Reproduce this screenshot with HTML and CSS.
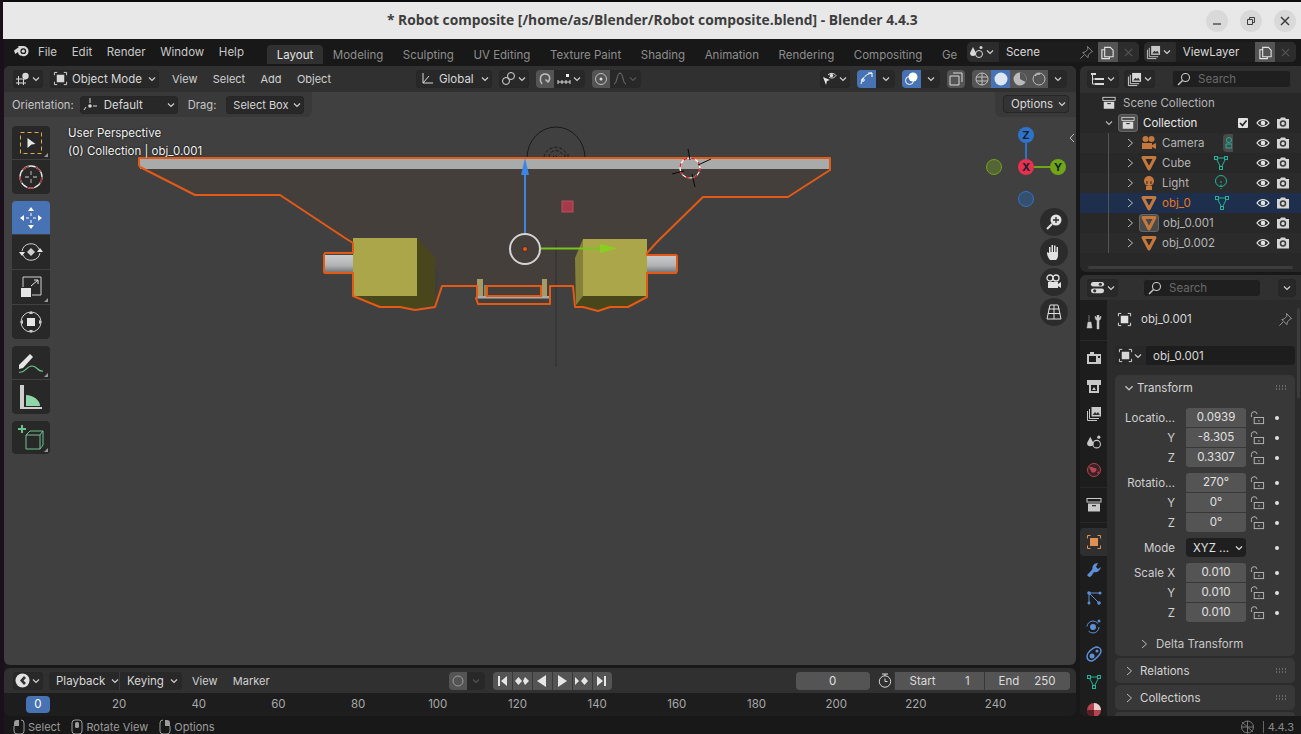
FILE: index.html
```html
<!DOCTYPE html>
<html lang="en">
<head>
<meta charset="utf-8">
<title>Blender</title>
<link rel="stylesheet" href="styles.css">
</head>
<body>
<svg class="defs" aria-hidden="true">
  <defs>
    <linearGradient id="axle" x1="0" y1="0" x2="0" y2="1"><stop offset="0" stop-color="#c9cbcc"/><stop offset=".6" stop-color="#b2b4b5"/><stop offset="1" stop-color="#77797a"/></linearGradient>
    <symbol id="chev" viewBox="0 0 10 10"><path d="M2 3.500 5 6.500 8 3.500" fill="none" stroke="currentColor" stroke-width="1.200"/></symbol>
    <symbol id="chevr" viewBox="0 0 10 10"><path d="M3 1 7.500 5 3 9" fill="none" stroke="currentColor" stroke-width="1"/></symbol>
    <symbol id="lock" viewBox="0 0 16 14"><path d="M1.500 6V3.500a3 3 0 0 1 6 -.5" fill="none" stroke="currentColor"/><rect x="4.500" y="6.500" width="10" height="6.500" fill="none" stroke="currentColor"/><rect x="9" y="9" width="1" height="2" fill="currentColor"/></symbol>
    <symbol id="obj" viewBox="0 0 16 16"><path d="M1.500 1.500h3M11.500 1.500h3v3M14.500 11.500v3h-3M4.500 14.500h-3v-3M1.500 4.500v-3" fill="none" stroke="currentColor"/><rect x="4" y="4" width="8" height="8" fill="currentColor"/></symbol>
    <symbol id="tri" viewBox="0 0 16 16"><path d="M2 2.500h12L8 14Z" fill="none" stroke="#c5783c" stroke-width="3" stroke-linejoin="round"/></symbol>
    <symbol id="mesh" viewBox="0 0 16 16"><path d="M3 3h10L8 13Z" fill="none" stroke="#1fb39a"/><rect x="1.500" y="1.500" width="3" height="3" fill="#282828" stroke="#1fb39a"/><rect x="11.500" y="1.500" width="3" height="3" fill="#282828" stroke="#1fb39a"/><rect x="6.500" y="11.500" width="3" height="3" fill="#282828" stroke="#1fb39a"/></symbol>
    <symbol id="eye" viewBox="0 0 14 14"><path d="M1 7c3-4.500 9-4.500 12 0-3 4.500-9 4.500-12 0Z" fill="none" stroke="#e2e2e2" stroke-width="1.300"/><circle cx="7" cy="7" r="2.300" fill="#e2e2e2"/></symbol>
    <symbol id="cam" viewBox="0 0 14 14"><path d="M1 3h3l1-1.500h4L10 3h3v9.500H1Z" fill="#d6d6d6"/><circle cx="7" cy="7.500" r="3.200" fill="#3a3a3a"/><circle cx="7" cy="7.500" r="1.700" fill="#d6d6d6"/></symbol>
    <symbol id="archive" viewBox="0 0 16 16"><rect x="1" y="1.500" width="14" height="3.500" fill="none" stroke="currentColor"/><path d="M2 6.500h12v8H2Z" fill="currentColor"/><rect x="6" y="8" width="4" height="1.300" fill="#333"/></symbol>
    <symbol id="stack" viewBox="0 0 16 16"><path d="M1.500 5v9.500H11M3.500 3v9.500H13" fill="none" stroke="currentColor"/><rect x="5.500" y="1" width="9.500" height="9.500" fill="currentColor"/><path d="M6.500 9 9 6l1.500 1.500L12 6l2 3Z" fill="#333"/></symbol>
    <symbol id="copy" viewBox="0 0 16 16"><path d="M5 2.500h6l3 3v7H5ZM5 5H2v9.500h8V12.500" fill="none" stroke="currentColor" stroke-width="1.200"/></symbol>
    <symbol id="x" viewBox="0 0 12 12"><path d="M2 2 10 10M10 2 2 10" stroke="currentColor" stroke-width="1.200"/></symbol>
    <symbol id="pin" viewBox="0 0 16 16"><path d="M9 1.500 14.500 7l-1.500.5-3 3-.5 3L4 8l2.500-.5 3-3Z M5.500 10.500 1.500 14.500" fill="none" stroke="currentColor"/></symbol>
    <symbol id="mag" viewBox="0 0 14 14"><circle cx="8.500" cy="5.500" r="4" fill="none" stroke="currentColor" stroke-width="1.100"/><path d="M5.500 8.500 1 13" stroke="currentColor" stroke-width="1.500"/></symbol>
    <symbol id="props" viewBox="0 0 16 16"><rect x="1" y="2" width="14" height="5" rx="2.500" fill="currentColor"/><rect x="1" y="9" width="14" height="5" rx="2.500" fill="currentColor"/><circle cx="11" cy="4.500" r="1.700" fill="#333"/><circle cx="5" cy="11.500" r="1.700" fill="#333"/></symbol>
    <symbol id="grip" viewBox="0 0 12 6"><path d="M1 1h1M4 1h1M7 1h1M10 1h1M1 4h1M4 4h1M7 4h1M10 4h1" stroke="#9a9a9a" stroke-width="1.200"/></symbol>
    <symbol id="mouse-l" viewBox="0 0 12 16"><path d="M1 6V4a3 3 0 0 1 3-3h2v6H1Z" fill="currentColor"/><path d="M1 7v5a3 3 0 0 0 3 3h4a3 3 0 0 0 3-3V4a3 3 0 0 0-3-3" fill="none" stroke="currentColor"/></symbol>
    <symbol id="mouse-m" viewBox="0 0 12 16"><rect x="1" y="1" width="10" height="14" rx="3" fill="none" stroke="currentColor"/><rect x="4" y="3" width="4" height="6" rx="1.500" fill="currentColor"/></symbol>
    <symbol id="mouse-r" viewBox="0 0 12 16"><path d="M11 6V4a3 3 0 0 0-3-3H6v6h5Z" fill="currentColor"/><path d="M11 7v5a3 3 0 0 1-3 3H4a3 3 0 0 1-3-3V4a3 3 0 0 1 3-3" fill="none" stroke="currentColor"/></symbol>
  </defs>
</svg>

<header class="titlebar">
  <span class="title">* Robot composite [/home/as/Blender/Robot composite.blend] - Blender 4.4.3</span>
  <div class="winbtns">
    <span class="winbtn"><svg width="12" height="12" viewBox="0 0 12 12"><path d="M2 9h8" stroke="#3d3d3d" stroke-width="1.300"/></svg></span>
    <span class="winbtn"><svg width="12" height="12" viewBox="0 0 12 12"><path d="M2.500 4.500h5v5h-5ZM4.500 4.500v-2h5v5h-2" fill="none" stroke="#3d3d3d"/></svg></span>
    <span class="winbtn"><svg width="12" height="12" viewBox="0 0 12 12"><path d="M2 2 10 10M10 2 2 10" stroke="#3d3d3d" stroke-width="1.500"/></svg></span>
  </div>
</header>

<div class="app">
  <nav class="topbar">
    <svg class="logo" width="17" height="14" viewBox="0 0 17 14"><path d="M1 7.500 6 4 4.500 3h5c3.500 0 6 2 6 5.200s-2.500 5-5.200 5c-3 0-5.300-1.800-5.300-4.200L2.200 11Z" fill="#d8d8d8"/><circle cx="10.300" cy="8.200" r="2.900" fill="#181818"/><circle cx="10.300" cy="8.200" r="1.600" fill="#d8d8d8"/></svg>
    <div class="menus"><span>File</span><span>Edit</span><span>Render</span><span>Window</span><span>Help</span></div>
    <div class="tabs">
      <span class="tab active">Layout</span><span class="tab">Modeling</span><span class="tab">Sculpting</span><span class="tab">UV Editing</span><span class="tab">Texture Paint</span><span class="tab">Shading</span><span class="tab">Animation</span><span class="tab">Rendering</span><span class="tab">Compositing</span><span class="tab cut">Ge</span>
    </div>
    <div class="scene-block">
      <div class="sel-group scene-g">
        <span class="dd-btn w31"><svg width="15" height="14" viewBox="0 0 15 14"><path d="M4 2 7 8a3 3 0 0 1-6 0Z" fill="#d8d8d8"/><circle cx="10" cy="9" r="3.500" fill="none" stroke="#d8d8d8"/><circle cx="12" cy="2.500" r="1.500" fill="#d8d8d8"/></svg><svg class="ch" width="10" height="10"><use href="#chev"/></svg></span>
        <span class="field-dark scene-f">Scene<svg class="pinic" width="15" height="15"><use href="#pin"/></svg></span>
        <span class="icn lit"><svg width="15" height="15"><use href="#copy"/></svg></span>
        <span class="icn dim"><svg width="11" height="11"><use href="#x"/></svg></span>
      </div>
      <div class="sel-group layer-g">
        <span class="dd-btn w31"><svg width="15" height="15"><use href="#stack"/></svg><svg class="ch" width="10" height="10"><use href="#chev"/></svg></span>
        <span class="field-dark layer-f">ViewLayer</span>
        <span class="icn lit"><svg width="15" height="15"><use href="#copy"/></svg></span>
        <span class="icn dim"><svg width="11" height="11"><use href="#x"/></svg></span>
      </div>
    </div>
  </nav>

  <div class="workspace">
    <div class="leftcol">
    <main class="viewport">
      <div class="vp-header">
        <span class="btn w30"><svg width="15" height="14" viewBox="0 0 15 14"><path d="M1 7h10M1 11h10M3.500 4v9M8.500 7v6" stroke="#d8d8d8"/><circle cx="10.500" cy="4" r="3.200" fill="#d8d8d8"/></svg><svg class="ch" width="10" height="10"><use href="#chev"/></svg></span>
        <span class="btn mode"><svg width="15" height="15"><use href="#obj"/></svg><span class="lb">Object Mode</span><svg class="ch" width="10" height="10"><use href="#chev"/></svg></span>
        <div class="vp-menu"><span>View</span><span>Select</span><span>Add</span><span>Object</span></div>
        <div class="vp-mid">
          <span class="btn global"><svg width="14" height="14" viewBox="0 0 14 14"><path d="M3 1v10h10M3 11l6-7" fill="none" stroke="#d8d8d8"/></svg><span class="lb">Global</span><svg class="ch" width="10" height="10"><use href="#chev"/></svg></span>
          <span class="btn pivot"><svg width="15" height="15" viewBox="0 0 15 15"><circle cx="5" cy="10" r="3.500" fill="none" stroke="#d8d8d8"/><circle cx="10" cy="5" r="3.500" fill="none" stroke="#d8d8d8"/></svg><svg class="ch" width="10" height="10"><use href="#chev"/></svg></span>
          <span class="btn-join snap"><span class="seg lit s18"><svg width="14" height="14" viewBox="0 0 14 14"><path d="M4 12C1 8 2 2 7 2s6 5 3 8L7.500 7.500" fill="none" stroke="#bdbdbd" stroke-width="1.500"/></svg></span><span class="seg s31"><svg width="14" height="12" viewBox="0 0 14 12"><path d="M1 7v4M5 7v4M9 7v4M13 7v4M1 9h12" stroke="#d8d8d8"/><rect x="9" y="1" width="3" height="3" fill="#eee"/></svg><svg class="ch" width="10" height="10"><use href="#chev"/></svg></span></span>
          <span class="btn-join prop"><span class="seg lit s18"><svg width="14" height="14" viewBox="0 0 14 14"><circle cx="7" cy="7" r="5.500" fill="none" stroke="#bdbdbd"/><circle cx="7" cy="7" r="1.500" fill="#ddd"/></svg></span><span class="seg s31 off"><svg width="14" height="13" viewBox="0 0 14 13"><path d="M1 12C4 12 4 1 7 1s3 11 6 11" fill="none" stroke="#777"/></svg><svg class="ch" width="10" height="10"><use href="#chev"/></svg></span></span>
        </div>
        <div class="vp-right">
          <span class="btn w30"><svg width="15" height="14" viewBox="0 0 15 14"><path d="M6 3c2.500-2.500 6-2 8 .5-2 3-5 3-7 1.500" fill="none" stroke="#e2e2e2"/><circle cx="9.500" cy="3.500" r="1.700" fill="#e2e2e2"/><path d="M1 5l7 3-3 1-1 4Z" fill="#e2e2e2"/></svg><svg class="ch" width="10" height="10"><use href="#chev"/></svg></span>
          <span class="btn-join"><span class="seg blue s19"><svg width="15" height="15" viewBox="0 0 15 15"><path d="M2 13C3 7 7 3 13 2M9 2h4v4" fill="none" stroke="#fff"/><circle cx="4" cy="9" r="1.300" fill="none" stroke="#fff"/></svg></span><span class="seg s19"><svg class="ch" width="10" height="10"><use href="#chev"/></svg></span></span>
          <span class="btn-join"><span class="seg blue s19"><svg width="15" height="15" viewBox="0 0 15 15"><circle cx="5.500" cy="9.500" r="4" fill="none" stroke="#fff"/><circle cx="9" cy="6" r="4.500" fill="#fff"/></svg></span><span class="seg s19"><svg class="ch" width="10" height="10"><use href="#chev"/></svg></span></span>
          <span class="btn-join"><span class="seg lit s18"><svg width="14" height="14" viewBox="0 0 14 14"><path d="M4 1h9v9M1 4h9v9H1Z" fill="none" stroke="#d8d8d8"/></svg></span></span>
          <span class="btn-join shade">
            <span class="seg lit s19"><svg width="14" height="14" viewBox="0 0 14 14"><circle cx="7" cy="7" r="6" fill="none" stroke="#bdbdbd"/><path d="M1 5h12M1 9h12M7 1v12" stroke="#bdbdbd"/></svg></span>
            <span class="seg blue s19"><svg width="14" height="14"><circle cx="7" cy="7" r="6.500" fill="#dde6f5"/></svg></span>
            <span class="seg lit s19"><svg width="14" height="14" viewBox="0 0 14 14"><circle cx="7" cy="7" r="6.500" fill="#bbb"/><path d="M7 .5A6.500 6.500 0 0 1 12.500 10L7 7Z" fill="#555"/></svg></span>
            <span class="seg lit s19"><svg width="14" height="14" viewBox="0 0 14 14"><circle cx="7" cy="7" r="6" fill="#555" stroke="#bbb"/><path d="M3 4a5 5 0 0 1 5-2" stroke="#ddd" fill="none"/></svg></span>
            <span class="seg s19"><svg class="ch" width="10" height="10"><use href="#chev"/></svg></span>
          </span>
        </div>
      </div>
      <div class="vp-tools">
        <div class="tool-settings">
          <span class="lbl">Orientation:</span>
          <span class="btn default"><svg width="15" height="15" viewBox="0 0 15 15"><path d="M7 1v5M10 9h4M3 10l-2 3" stroke="#d8d8d8"/><circle cx="7" cy="9" r="1.800" fill="#d8d8d8"/></svg><span class="lb">Default</span><svg class="ch" width="10" height="10"><use href="#chev"/></svg></span>
          <span class="lbl drag">Drag:</span>
          <span class="btn box"><span class="lb">Select Box</span><svg class="ch" width="10" height="10"><use href="#chev"/></svg></span>
        </div>
        <div class="options-wrap"><span class="btn options"><span class="lb">Options</span><svg class="ch" width="10" height="10"><use href="#chev"/></svg></span></div>
      </div>

      <svg class="scene" viewBox="4 66 1072 599" aria-hidden="true">
        <path d="M140 167 195 195H280L345 238 353 243V296L380 307H400L415 310 435 307 442 286H477L476 297 478 304H550V286H573L575 307 583 307 598 311 610 307H628L647 297V253L657 242 703 197H788L830 170V158H139Z" fill="#453f3c"/>
        <line x1="556" y1="240" x2="556" y2="367" stroke="#2f2f2f"/>
        <path d="M527 158A29 31 0 0 1 585 158" fill="none" stroke="#1a1a1a"/>
        <path d="M544 157A12 12 0 0 1 566 153M549 157A7 7 0 0 1 562 154M552 158l3-3 3 3M565 154v4M568 154v4" fill="none" stroke="#1a1a1a" stroke-dasharray="3 2"/>
        <rect x="140" y="159" width="690" height="10" fill="#a9abab"/>
        <rect x="325" y="255" width="29" height="17" fill="url(#axle)"/>
        <rect x="646" y="255" width="30" height="17" fill="url(#axle)"/>
        <path d="M435 268A14 14 0 0 1 438 282L435 295Z" fill="#3e3e3e"/>
        <path d="M417 238 435 258 435 305 415 309 400 307H380L353 296H417Z" fill="#4a461c"/>
        <rect x="353" y="238" width="64" height="58" fill="#aca64b"/>
        <path d="M583 239 575 258V305L598 310 628 306 647 296H583Z" fill="#4a461c"/>
        <path d="M583 239 575 258 576 305 583 296Z" fill="#86813a"/>
        <rect x="583" y="239" width="64" height="57" fill="#aca64b"/>
        <path d="M477 279h6v17h-6ZM542 279h5v17h-5Z" fill="#a69a68"/>
        <path d="M484 285h2v11h-2Z" fill="#8f8558"/>
        <rect x="476" y="296" width="74" height="2.500" fill="#a9abab"/>
        <path d="M140 167 195 195H280L345 238 353 243V253H325L324 255V272L325 273H353V296L380 307H400L415 310 435 307 442 286H477V297L476 298 478 304H550V286H573L575 307 583 307 598 311 610 307H628L647 297V273H676L677 271V256L676 255H647V253L657 242 703 197H788L830 170V158H139V165Z" fill="none" stroke="#e35a17" stroke-width="2" stroke-linejoin="round"/>
        <path d="M487 286H541V296H487Z" fill="none" stroke="#e35a17" stroke-width="2"/>
        <rect x="562" y="201" width="11" height="11" fill="#a63a48" stroke="#b85060"/>
        <g fill="none"><circle cx="690" cy="168" r="10" stroke="#fff" stroke-width="1.200"/><circle cx="690" cy="168" r="10" stroke="#e01010" stroke-width="1.200" stroke-dasharray="4 4"/><path d="M688 149 690 160M711 159 698 165M672 174 684 171M695 187 692 174" stroke="#0a0a0a"/></g>
        <line x1="525" y1="234" x2="525" y2="170" stroke="#3d85e0" stroke-width="2"/>
        <path d="M525 158 521 175H529Z" fill="#3d85e0"/>
        <circle cx="525" cy="249" r="15" fill="none" stroke="#d4d4d4" stroke-width="2"/>
        <circle cx="525" cy="249" r="2.500" fill="#e35a17" stroke="#222" stroke-width=".7"/>
        <line x1="541" y1="248.500" x2="605" y2="248.500" stroke="#76c41e" stroke-width="2"/>
        <path d="M617 248.500 600 244V253Z" fill="#86d11e"/>
        <g class="nav-axes">
          <line x1="1026" y1="143" x2="1026" y2="160" stroke="#2e73c8" stroke-width="2"/>
          <line x1="1034" y1="167" x2="1052" y2="167" stroke="#6fa516" stroke-width="2"/>
          <circle cx="1026" cy="135" r="8" fill="#2e73c8"/>
          <circle cx="1026" cy="167" r="8" fill="#e8304f"/>
          <circle cx="1058" cy="167" r="8" fill="#6fa516"/>
          <circle cx="994" cy="167" r="7.500" fill="#556536" stroke="#6fa516"/>
          <circle cx="1026" cy="199" r="7.500" fill="#35506f" stroke="#2e73c8"/>
          <text x="1026" y="139" class="ax">Z</text>
          <text x="1026" y="171" class="ax">X</text>
          <text x="1058" y="171" class="ax">Y</text>
        </g>
        <path d="M1074 134 1070 138 1074 142" fill="none" stroke="#bbb"/>
      </svg>

      <div class="toolbar">
        <div class="tgroup">
          <span class="tool h33 corner"><svg width="24" height="24" viewBox="0 0 24 24"><rect x="1.500" y="1.500" width="21" height="21" fill="none" stroke="#e3a94b" stroke-dasharray="4 3"/><path d="M8.500 7 16.500 13 12.500 13.500 8.500 17Z" fill="#e6e6e6"/></svg></span>
          <span class="tool h34"><svg width="24" height="24" viewBox="0 0 24 24"><circle cx="12" cy="12" r="11" fill="none" stroke="#e8e8e8" stroke-width="1.300"/><circle cx="12" cy="12" r="11" fill="none" stroke="#a03038" stroke-width="1.300" stroke-dasharray="7 7"/><path d="M12 6v4M12 14v4M6 12h4M14 12h4" stroke="#999" stroke-width="1.300"/></svg></span>
        </div>
        <div class="tgroup">
          <span class="tool h33 active"><svg width="24" height="24" viewBox="0 0 24 24"><path d="M12 1l3 4H9ZM12 23l3-4H9ZM1 12l4-3v6ZM23 12l-4-3v6Z" fill="#fff"/><path d="M12 7v3M12 14v3M7 12h3M14 12h3" stroke="#fff"/></svg></span>
          <span class="tool h34"><svg width="24" height="24" viewBox="0 0 24 24"><path d="M3 11A9 9 0 0 1 20 9M21 13A9 9 0 0 1 4 15" fill="none" stroke="#cfcfcf"/><path d="M0 12h6l-3 4ZM18 12h6l-3-4Z" fill="#e6e6e6"/><path d="M12 8l4 4-4 4-4-4Z" fill="#cfcfcf"/></svg></span>
          <span class="tool h34 corner"><svg width="24" height="24" viewBox="0 0 24 24"><path d="M4 12V2H22V20H13" fill="none" stroke="#cfcfcf"/><rect x="2" y="13" width="10" height="9" fill="#e6e6e6"/><path d="M12 11 19 5M15 5h4v4" fill="none" stroke="#e6e6e6"/></svg></span>
          <span class="tool h34"><svg width="24" height="24" viewBox="0 0 24 24"><circle cx="12" cy="12" r="10" fill="none" stroke="#cfcfcf"/><rect x="8" y="8" width="8" height="8" fill="#e6e6e6"/><path d="M12 1l2 3h-4ZM12 23l2-3h-4ZM1 12l3-2v4ZM23 12l-3-2v4Z" fill="#cfcfcf"/></svg></span>
        </div>
        <div class="tgroup">
          <span class="tool h33 corner"><svg width="28" height="24" viewBox="0 0 28 24"><path d="M2 14 13 3l3 3L6 17 2 18Z" fill="#e6e6e6"/><path d="M2 21C8 23 9 15 15 15s5 6 11 5" fill="none" stroke="#6ec28f" stroke-width="1.200"/></svg></span>
          <span class="tool h34"><svg width="24" height="26" viewBox="0 0 24 26"><path d="M1 1h4v22h18v2H1Z" fill="#cfcfcf"/><path d="M7 22V11c7 0 14 5 14 11Z" fill="#8fd6a8"/></svg></span>
        </div>
        <div class="tgroup">
          <span class="tool h33 corner"><svg width="26" height="26" viewBox="0 0 26 26"><path d="M8 10h14v14H8ZM8 10l4-4h13v14l-3 4M22 10l3-4" fill="none" stroke="#6ec28f"/><path d="M4 0v8M0 4h8" stroke="#6ec28f" stroke-width="2"/></svg></span>
        </div>
      </div>
      <div class="vp-info"><div>User Perspective</div><div>(0) Collection | obj_0.001</div></div>
      <div class="nav-btns">
        <span class="nav"><svg width="18" height="18" viewBox="0 0 18 18"><circle cx="11" cy="7" r="5.500" fill="#e2e2e2"/><path d="M7 11 2 16" stroke="#e2e2e2" stroke-width="2"/><path d="M11 4v6M8 7h6" stroke="#2b2b2b" stroke-width="1.300"/></svg></span>
        <span class="nav"><svg width="18" height="18" viewBox="0 0 18 18"><path d="M5 17C2 13 2 11 2 9l2 1V4h1.500v5h1V2H8v7h1V2.500h1.500V9h1V4H13v8c0 3-1 4-2 5Z" fill="#e2e2e2"/></svg></span>
        <span class="nav"><svg width="18" height="18" viewBox="0 0 18 18"><circle cx="5" cy="5" r="3" fill="none" stroke="#e2e2e2" stroke-width="1.300"/><circle cx="11" cy="5" r="3" fill="none" stroke="#e2e2e2" stroke-width="1.300"/><path d="M3 9h10v6H3ZM13 11l3-2v6l-3-2Z" fill="#e2e2e2"/></svg></span>
        <span class="nav"><svg width="18" height="18" viewBox="0 0 18 18"><path d="M5 2h8l3 14H2ZM9 2v14M3.500 6h11M2.800 10.500h12.400" fill="none" stroke="#e2e2e2"/></svg></span>
      </div>
    </main>

    <section class="timeline">
      <div class="tl-head">
        <span class="btn w30"><svg width="15" height="15" viewBox="0 0 15 15"><circle cx="7.500" cy="7.500" r="7" fill="#e2e2e2"/><path d="M9 3 5 7.500 9 12l2-2-2.500-2.500L11 5Z" fill="#333"/></svg><svg class="ch" width="10" height="10"><use href="#chev"/></svg></span>
        <div class="btn-join pk"><span class="seg pb"><span>Playback</span><svg class="ch" width="10" height="10"><use href="#chev"/></svg></span><span class="seg ky"><span>Keying</span><svg class="ch" width="10" height="10"><use href="#chev"/></svg></span></div>
        <div class="vp-menu tlm"><span>View</span><span>Marker</span></div>
        <div class="tl-mid">
          <span class="btn-join rec"><span class="seg lit s18"><svg width="12" height="12"><circle cx="6" cy="6" r="5" fill="none" stroke="#9a9a9a"/></svg></span><span class="seg s18 off"><svg class="ch" width="10" height="10"><use href="#chev"/></svg></span></span>
          <span class="transport">
            <span class="tp"><svg width="12" height="12" viewBox="0 0 12 12"><path d="M2 1h2v10H2ZM11 1v10L5 6Z" fill="#e6e6e6"/></svg></span>
            <span class="tp"><svg width="14" height="12" viewBox="0 0 14 12"><path d="M3.500 2 7 6 3.500 10 0 6ZM10 2l4 4-4 4-2-4Z" fill="#e6e6e6"/></svg></span>
            <span class="tp"><svg width="12" height="12" viewBox="0 0 12 12"><path d="M10 0v12L1 6Z" fill="#e6e6e6"/></svg></span>
            <span class="tp"><svg width="12" height="12" viewBox="0 0 12 12"><path d="M2 0v12l9-6Z" fill="#e6e6e6"/></svg></span>
            <span class="tp"><svg width="14" height="12" viewBox="0 0 14 12"><path d="M0 2l4 4-4 4ZM9.500 2 13 6 9.500 10 6 6Z" fill="#e6e6e6"/></svg></span>
            <span class="tp"><svg width="12" height="12" viewBox="0 0 12 12"><path d="M1 1v10l6-5ZM8 1h2v10H8Z" fill="#e6e6e6"/></svg></span>
          </span>
        </div>
        <div class="tl-right">
          <span class="cur">0</span>
          <span class="range">
            <span class="stop"><svg width="14" height="15" viewBox="0 0 14 15"><circle cx="7" cy="8.500" r="5.700" fill="none" stroke="#d8d8d8"/><path d="M4 1h6M7 1v2M7 5.500v3h2.500" fill="none" stroke="#d8d8d8"/></svg></span>
            <span class="rf st"><span>Start</span><span>1</span></span>
            <span class="rf en"><span>End</span><span>250</span></span>
          </span>
        </div>
      </div>
      <div class="ruler">
        <span class="tick cur-tick"><b>0</b></span><span class="tick">20</span><span class="tick">40</span><span class="tick">60</span><span class="tick">80</span><span class="tick">100</span><span class="tick">120</span><span class="tick">140</span><span class="tick">160</span><span class="tick">180</span><span class="tick">200</span><span class="tick">220</span><span class="tick">240</span>
      </div>
    </section>
    </div>

    <aside class="rightcol">
      <section class="outliner">
        <div class="ol-head">
          <span class="btn w32"><svg width="15" height="14" viewBox="0 0 15 14"><path d="M1 1h5v2H1Z M5 6h9v2H5ZM5 11h9v2H5Z" fill="#d8d8d8"/><path d="M2.500 3v9h3M2.500 7h3" fill="none" stroke="#d8d8d8"/></svg><svg class="ch" width="10" height="10"><use href="#chev"/></svg></span>
          <span class="btn w31"><svg width="15" height="15"><use href="#stack"/></svg><svg class="ch" width="10" height="10"><use href="#chev"/></svg></span>
          <span class="search s-ol"><svg width="14" height="14"><use href="#mag"/></svg><span>Search</span></span>
        </div>
        <ul class="tree">
          <li class="row sc"><svg class="ic" width="14" height="14"><use href="#archive"/></svg><span class="nm">Scene Collection</span></li>
          <li class="row coll"><svg class="ex" width="10" height="10"><use href="#chev"/></svg><span class="actico"><svg width="14" height="14"><use href="#archive"/></svg></span><span class="nm hi">Collection</span><span class="check"><svg width="10" height="10" viewBox="0 0 10 10"><path d="M2 5 4.500 7.500 8.500 2.500" fill="none" stroke="#222" stroke-width="1.600"/></svg></span><span class="vis"><svg width="14" height="14"><use href="#eye"/></svg><svg width="14" height="14"><use href="#cam"/></svg></span></li>
          <li class="row item alt"><svg class="ex" width="10" height="10"><use href="#chevr"/></svg><svg class="ic" width="16" height="16" viewBox="0 0 16 16"><circle cx="4.500" cy="4" r="3" fill="#c5783c"/><circle cx="10.500" cy="4" r="3" fill="#c5783c"/><path d="M1 8h10v6H1ZM11 10l4-2v6l-4-2Z" fill="#c5783c"/></svg><span class="nm w-cam">Camera</span><span class="camdata"><svg width="9" height="14" viewBox="0 0 9 14"><circle cx="6" cy="4" r="2.500" fill="none" stroke="#1fb39a"/><path d="M3 8h6v4H3Z" fill="none" stroke="#1fb39a"/></svg></span><span class="vis"><svg width="14" height="14"><use href="#eye"/></svg><svg width="14" height="14"><use href="#cam"/></svg></span></li>
          <li class="row item"><svg class="ex" width="10" height="10"><use href="#chevr"/></svg><svg class="ic" width="16" height="16"><use href="#tri"/></svg><span class="nm w-cube">Cube</span><svg class="dt" width="16" height="16"><use href="#mesh"/></svg><span class="vis"><svg width="14" height="14"><use href="#eye"/></svg><svg width="14" height="14"><use href="#cam"/></svg></span></li>
          <li class="row item alt"><svg class="ex" width="10" height="10"><use href="#chevr"/></svg><svg class="ic" width="16" height="16" viewBox="0 0 16 16"><circle cx="8" cy="6" r="5" fill="#c5783c"/><path d="M5 11h6v4H5Z" fill="#c5783c"/><path d="M6 6v3M10 6v3" stroke="#282828"/></svg><span class="nm w-cube">Light</span><svg class="dt" width="16" height="16" viewBox="0 0 16 16"><circle cx="8" cy="6" r="5.500" fill="none" stroke="#1fb39a"/><path d="M8 6v8" stroke="#1fb39a" stroke-dasharray="2 1.500"/></svg><span class="vis"><svg width="14" height="14"><use href="#eye"/></svg><svg width="14" height="14"><use href="#cam"/></svg></span></li>
          <li class="row item sel"><svg class="ex" width="10" height="10"><use href="#chevr"/></svg><svg class="ic" width="16" height="16"><use href="#tri"/></svg><span class="nm w-obj orange">obj_0</span><svg class="dt" width="16" height="16"><use href="#mesh"/></svg><span class="vis"><svg width="14" height="14"><use href="#eye"/></svg><svg width="14" height="14"><use href="#cam"/></svg></span></li>
          <li class="row item"><svg class="ex" width="10" height="10"><use href="#chevr"/></svg><span class="actico tight"><svg width="16" height="16"><use href="#tri"/></svg></span><span class="nm">obj_0.001</span><span class="vis"><svg width="14" height="14"><use href="#eye"/></svg><svg width="14" height="14"><use href="#cam"/></svg></span></li>
          <li class="row item alt"><svg class="ex" width="10" height="10"><use href="#chevr"/></svg><svg class="ic" width="16" height="16"><use href="#tri"/></svg><span class="nm">obj_0.002</span><span class="vis"><svg width="14" height="14"><use href="#eye"/></svg><svg width="14" height="14"><use href="#cam"/></svg></span></li>
        </ul>
        <div class="ol-scroll"></div>
      </section>

      <section class="properties">
        <div class="pr-head">
          <span class="btn w31"><svg width="15" height="15"><use href="#props"/></svg><svg class="ch" width="10" height="10"><use href="#chev"/></svg></span>
          <span class="search s-pr"><svg width="14" height="14"><use href="#mag"/></svg><span>Search</span></span>
          <span class="btn w18"><svg class="ch" width="10" height="10"><use href="#chev"/></svg></span>
        </div>
        <div class="pr-body">
          <div class="pr-tabs">
            <div class="tabgroup first"><span class="ptab"><svg width="16" height="16" viewBox="0 0 16 16"><path d="M3 1v6M2 8h3l1 6H1ZM11 1v3l-2-2c0 3 1 4 2 4.500V15h2V6.500C14 6 15 5 15 2l-2 2V1" fill="#c9c9c9" stroke="#c9c9c9" stroke-width=".5"/></svg></span></div>
            <div class="tabgroup">
              <span class="ptab"><svg width="16" height="16" viewBox="0 0 16 16"><path d="M1 4h14v10H1Z" fill="#c9c9c9"/><rect x="4" y="2" width="4" height="2" fill="#c9c9c9"/><rect x="3" y="6" width="7" height="6" fill="#1d1d1d"/><rect x="12" y="6" width="2" height="2" fill="#1d1d1d"/></svg></span>
              <span class="ptab"><svg width="16" height="16" viewBox="0 0 16 16"><path d="M1 2h14v5H13V15H3V7H1Z" fill="#c9c9c9"/><path d="M5 7h6v6H5Z" fill="#1d1d1d"/><path d="M6 12 8 9l2 3Z" fill="#c9c9c9"/></svg></span>
              <span class="ptab"><svg width="16" height="16"><use href="#stack"/></svg></span>
              <span class="ptab"><svg width="16" height="16" viewBox="0 0 15 14"><path d="M4 2 7 8a3 3 0 0 1-6 0Z" fill="#c9c9c9"/><circle cx="10" cy="9" r="3.500" fill="none" stroke="#c9c9c9"/><circle cx="12" cy="2.500" r="1.500" fill="#c9c9c9"/></svg></span>
              <span class="ptab"><svg width="16" height="16" viewBox="0 0 16 16"><circle cx="8" cy="8" r="6.500" fill="#3a2226" stroke="#b5444f"/><path d="M3 5c3-1 4 1 6 1s2 3 0 4-3 1-4-1ZM11 11l2-2v3Z" fill="#b5444f"/></svg></span>
            </div>
            <div class="tabgroup"><span class="ptab"><svg width="16" height="16"><use href="#archive"/></svg></span></div>
            <div class="tabgroup last">
              <span class="ptab current"><svg width="16" height="16" viewBox="0 0 16 16"><path d="M1.500 4.500v-3h3M11.500 1.500h3v3M14.500 11.500v3h-3M4.500 14.500h-3v-3" fill="none" stroke="#e09050"/><rect x="4" y="4" width="8" height="8" fill="#e09050"/></svg></span>
              <span class="ptab"><svg width="16" height="16" viewBox="0 0 16 16"><path d="M1 13c2 3 4 2 5 0l2-3c3 1 6-1 7-5l-3 2-2-2 2-4C8 1 6 4 6.500 7L4 10Z" fill="#5d8fd6"/></svg></span>
              <span class="ptab"><svg width="16" height="16" viewBox="0 0 16 16"><circle cx="3" cy="3" r="1.800" fill="#5d8fd6"/><circle cx="14" cy="3" r="1.500" fill="#5d8fd6"/><circle cx="3" cy="13" r="1.500" fill="#5d8fd6"/><circle cx="13" cy="13" r="1.800" fill="#5d8fd6"/><path d="M3 3h11M3 3v10M3 3l10 10" stroke="#5d8fd6"/></svg></span>
              <span class="ptab"><svg width="16" height="16" viewBox="0 0 16 16"><circle cx="7" cy="9" r="6" fill="none" stroke="#5d8fd6" stroke-dasharray="14 5"/><circle cx="7" cy="9" r="3" fill="#5d8fd6"/><circle cx="13" cy="3" r="1.500" fill="#5d8fd6"/></svg></span>
              <span class="ptab"><svg width="16" height="16" viewBox="0 0 16 16"><path d="M1 10c0-3 5-8 9-9 3 0 5 2 5 4 0 3-6 9-9 10-3 0-5-2-5-5Z" fill="none" stroke="#5d8fd6" stroke-width="1.500"/><circle cx="6" cy="10" r="2.500" fill="#5d8fd6"/><circle cx="11" cy="5" r="1.500" fill="#5d8fd6"/></svg></span>
              <span class="ptab"><svg width="16" height="16"><use href="#mesh"/></svg></span>
              <span class="ptab"><svg width="16" height="16" viewBox="0 0 16 16"><circle cx="8" cy="8" r="7" fill="#b5444f"/><path d="M8 8V1A7 7 0 0 1 15 8Z" fill="#e8d0d0"/><path d="M8 8H1A7 7 0 0 0 8 15Z" fill="#5a1e26"/></svg></span>
            </div>
          </div>
          <div class="pr-main">
            <div class="ctx"><svg class="c-ic" width="15" height="15"><use href="#obj"/></svg><span class="ctx-t">obj_0.001</span><svg class="c-pin" width="15" height="15"><use href="#pin"/></svg></div>
            <div class="namefield"><span class="nf-ic"><svg width="15" height="15"><use href="#obj"/></svg><svg class="ch" width="10" height="10"><use href="#chev"/></svg></span><span class="nf-t">obj_0.001</span></div>
            <div class="panel transform">
              <div class="p-title"><svg class="ch" width="12" height="12"><use href="#chev"/></svg><span>Transform</span><svg class="grip" width="12" height="6"><use href="#grip"/></svg></div>
              <div class="pgroup">
                <div class="prow"><span class="pl">Locatio...</span><span class="num top">0.0939</span><svg class="lk" width="15" height="14"><use href="#lock"/></svg><i class="dot"></i></div>
                <div class="prow"><span class="pl">Y</span><span class="num">-8.305</span><svg class="lk" width="15" height="14"><use href="#lock"/></svg><i class="dot"></i></div>
                <div class="prow"><span class="pl">Z</span><span class="num bot">0.3307</span><svg class="lk" width="15" height="14"><use href="#lock"/></svg><i class="dot"></i></div>
              </div>
              <div class="pgroup">
                <div class="prow"><span class="pl">Rotatio...</span><span class="num top">270°</span><svg class="lk" width="15" height="14"><use href="#lock"/></svg><i class="dot"></i></div>
                <div class="prow"><span class="pl">Y</span><span class="num">0°</span><svg class="lk" width="15" height="14"><use href="#lock"/></svg><i class="dot"></i></div>
                <div class="prow"><span class="pl">Z</span><span class="num bot">0°</span><svg class="lk" width="15" height="14"><use href="#lock"/></svg><i class="dot"></i></div>
              </div>
              <div class="pgroup">
                <div class="prow"><span class="pl">Mode</span><span class="modesel"><span>XYZ ...</span><svg width="10" height="10"><use href="#chev"/></svg></span><span class="lk blank"></span><i class="dot"></i></div>
              </div>
              <div class="pgroup">
                <div class="prow"><span class="pl">Scale X</span><span class="num top">0.010</span><svg class="lk" width="15" height="14"><use href="#lock"/></svg><i class="dot"></i></div>
                <div class="prow"><span class="pl">Y</span><span class="num">0.010</span><svg class="lk" width="15" height="14"><use href="#lock"/></svg><i class="dot"></i></div>
                <div class="prow"><span class="pl">Z</span><span class="num bot">0.010</span><svg class="lk" width="15" height="14"><use href="#lock"/></svg><i class="dot"></i></div>
              </div>
              <div class="subp"><svg width="10" height="10"><use href="#chevr"/></svg><span>Delta Transform</span></div>
            </div>
            <div class="panel closed"><svg width="10" height="10"><use href="#chevr"/></svg><span>Relations</span><svg class="grip" width="12" height="6"><use href="#grip"/></svg></div>
            <div class="panel closed"><svg width="10" height="10"><use href="#chevr"/></svg><span>Collections</span><svg class="grip" width="12" height="6"><use href="#grip"/></svg></div>
            <div class="panel closed stub"></div>
          </div>
          <div class="pr-scroll"></div>
        </div>
      </section>
    </aside>
  </div>

  <footer class="status">
    <span class="st-i first"><svg width="12" height="16"><use href="#mouse-l"/></svg>Select</span>
    <span class="st-i"><svg width="12" height="16"><use href="#mouse-m"/></svg>Rotate View</span>
    <span class="st-i"><svg width="12" height="16"><use href="#mouse-r"/></svg>Options</span>
    <span class="st-r"><svg width="15" height="14" viewBox="0 0 15 14"><circle cx="7.500" cy="7" r="6" fill="none" stroke="#777"/><path d="M1.500 7h12M7.500 1v12M2 2l11 10" stroke="#777"/></svg><i class="st-sep"></i>4.4.3</span>
  </footer>
</div>
</body>
</html>
```
FILE: styles.css
```css
* { box-sizing: border-box; }
html, body { margin: 0; padding: 0; }
body {
  width: 1301px; height: 734px; overflow: hidden;
  background: #1a0f1a;
  font-family: Inter, "Noto Sans", sans-serif;
  font-size: 11.5px; color: #d4d4d4;
  display: flex; flex-direction: column;
  padding-left: 3px;
}
.defs { position: absolute; width: 0; height: 0; }
svg { display: block; flex: none; }
ul { list-style: none; margin: 0; padding: 0; }

/* window title */
.titlebar {
  height: 39px; flex: none;
  border-top: 2px solid #0c0c0c;
  background: #e8e8e8; position: relative;
  display: flex; align-items: center; justify-content: flex-end;
}
.title {
  position: absolute; left: 384px; top: 9px;
  font: 700 13.8px/18px "Open Sans", sans-serif; color: #3d3d3d; white-space: nowrap;
}
.winbtns { display: flex; gap: 12px; margin-right: 5px; }
.winbtn { width: 22px; height: 22px; border-radius: 50%; background: #d9d9d9; display: flex; align-items: center; justify-content: center; }

.app { flex: 1; min-height: 0; display: flex; flex-direction: column; background: #181818; margin-left: 1px; }

/* top bar */
.topbar { height: 27px; flex: none; display: flex; align-items: flex-start; color: #c8c8c8; }
.logo { margin: 4px 0 0 9px; }
.menus { display: flex; gap: 14.6px; margin: 5px 0 0 8px; line-height: 16px; }
.tabs { display: flex; margin: 6px 0 0 23px; width: 700px; overflow: hidden; }
.tab { height: 19px; padding: 1px 9.8px 0; line-height: 18px; color: #8d8d8d; white-space: nowrap; border-radius: 4px 4px 0 0; }
.tab.active { background: #303030; color: #e4e4e4; }
.scene-block { display: flex; gap: 5px; margin-top: 3px; }
.sel-group { display: flex; height: 20px; background: #2a2a2a; border-radius: 5px; overflow: hidden; }
.dd-btn { display: flex; align-items: center; justify-content: center; gap: 1px; background: #2c2c2c; }
.w31 { width: 31px; }
.w32 { width: 32px; justify-content: center; gap: 1px; }
.field-dark { background: #1d1d1d; line-height: 20px; padding-left: 7px; color: #d8d8d8; margin-left: 1px; position: relative; display: flex; justify-content: space-between; align-items: center; }
.scene-f { width: 99px; padding-right: 4px; }
.layer-f { width: 80px; }
.pinic { color: #8a8a8a; }
.icn { width: 20px; display: flex; align-items: center; justify-content: center; }
.icn.lit { background: #545454; color: #e2e2e2; }
.icn.dim { background: #2c2c2c; color: #555; margin-left: 1px; }
.scene-g { width: 172px; }
.layer-g { width: 152px; }

/* layout columns */
.workspace { height: 650px; flex: none; display: flex; gap: 4px; }
.leftcol { width: 1072px; flex: none; display: flex; flex-direction: column; gap: 3px; }

/* viewport */
.viewport { height: 599px; flex: none; background: #404040; border-radius: 6px; position: relative; overflow: hidden; }
.vp-header { height: 26px; background: #303030; display: flex; align-items: center; padding: 0 9px 1px; position: relative; z-index: 2; }
.btn {
  height: 18px; background: #282828; border-radius: 4px;
  display: inline-flex; align-items: center; color: #d8d8d8; flex: none;
  box-shadow: inset 0 0 0 1px #262626;
}
.w30 { width: 30px; justify-content: center; gap: 1px; }
.w18 { width: 18px; justify-content: center; }
.ch { color: #cfcfcf; }
.lb { flex: 1; }
.mode { width: 109px; margin-left: 7px; padding: 0 2px 0 3px; gap: 4px; }
.vp-menu { display: flex; gap: 15.3px; margin-left: 13px; color: #d0d0d0; font-size: 11px; }
.vp-mid { display: flex; gap: 7px; margin-left: 85px; }
.global { width: 76px; padding: 0 2px 0 4px; gap: 5px; }
.pivot { width: 30px; justify-content: center; gap: 1px; }
.btn-join { display: inline-flex; height: 18px; border-radius: 4px; overflow: hidden; flex: none; }
.seg { height: 18px; display: inline-flex; align-items: center; justify-content: center; background: #282828; color: #d8d8d8; }
.seg.lit { background: #545454; }
.seg.blue { background: #4772b3; }
.s18 { width: 18px; }
.s19 { width: 19px; }
.s31 { width: 31px; gap: 1px; }
.off .ch { color: #555; }
.vp-right { display: flex; gap: 7px; margin-left: auto; }
.vp-tools { height: 25px; display: flex; justify-content: space-between; position: relative; z-index: 2; }
.tool-settings { width: 308px; background: #393939; border-radius: 0 0 6px 0; display: flex; align-items: center; padding-left: 8px; }
.lbl { color: #c4c4c4; font-size: 11.2px; }
.default { width: 98px; margin-left: 6px; padding: 0 2px 0 3px; gap: 6px; }
.drag { margin-left: 10px; }
.box { width: 78px; margin-left: 10px; padding: 0 2px 0 7px; font-size: 11px; }
.options-wrap { width: 81px; background: #393939; border-radius: 0 0 0 6px; padding: 3px 0 0 8px; }
.options { width: 66px; padding: 0 2px 0 8px; background: #333; }
.scene { position: absolute; left: 0; top: 0; width: 1072px; height: 599px; }
.ax { font: 700 11px Inter, sans-serif; text-anchor: middle; fill: #10202e; }
.toolbar { position: absolute; left: 8px; top: 60px; width: 38px; display: flex; flex-direction: column; gap: 7px; }
.tgroup { display: flex; flex-direction: column; gap: 1px; border-radius: 4px; overflow: hidden; }
.tool { display: flex; align-items: center; justify-content: center; background: #282828; position: relative; width: 38px; }
.tool.active { background: #4772b3; }
.h33 { height: 33px; }
.h34 { height: 34px; }
.corner::after { content: ""; position: absolute; right: 2px; bottom: 2px; border-style: solid; border-width: 0 0 4px 4px; border-color: transparent transparent #999 transparent; }
.vp-info { position: absolute; left: 64px; top: 58px; font-size: 11.5px; line-height: 18px; color: #f2f2f2; text-shadow: 0 0 2px #000; }
.nav-btns { position: absolute; left: 1036px; top: 142px; display: flex; flex-direction: column; gap: 2px; }
.nav { width: 28px; height: 28px; border-radius: 50%; background: #2b2b2b; display: flex; align-items: center; justify-content: center; color: #e2e2e2; }

/* right column */
.rightcol { width: 221px; flex: none; display: flex; flex-direction: column; gap: 3px; }
.outliner { height: 206px; flex: none; background: #282828; border-radius: 6px 0 0 6px; display: flex; flex-direction: column; overflow: hidden; }
.ol-head { height: 27px; background: #303030; display: flex; align-items: center; padding: 0 0 1px 7px; gap: 5px; flex: none; }
.ol-head .w31 { justify-content: center; gap: 1px; }
.search { height: 18px; background: #1f1f1f; border-radius: 4px; display: flex; align-items: center; gap: 7px; padding-left: 5px; color: #6a6a6a; box-shadow: inset 0 0 0 1px #303030; }
.search svg { color: #c8c8c8; }
.s-ol { width: 119px; margin-left: 12px; }
.tree { flex: 1; }
.row { height: 20px; display: flex; align-items: center; position: relative; color: #b4b4b4; background: #282828; }
.row.alt { background: #2b2b2b; }
.row.sel { background: #1d2f4d; }
.sc { padding-left: 22px; }
.sc .ic { color: #d8d8d8; margin-right: 7px; }
.coll { padding-left: 24px; }
.coll .actico { margin-left: 4px; }
.actico { width: 20px; height: 18px; background: #4a4a4a; border-radius: 4px; display: flex; align-items: center; justify-content: center; color: #d8d8d8; box-shadow: inset 0 0 0 1px #666; }
.nm { white-space: nowrap; }
.hi { color: #e8e8e8; margin-left: 5px; }
.check { width: 10px; height: 10px; background: #e2e2e2; border-radius: 1px; position: absolute; left: 158px; top: 5px; display: flex; }
.vis { position: absolute; left: 176px; top: 3px; display: flex; gap: 6px; }
.item { padding-left: 45px; }
.item::before { content: ""; position: absolute; left: 28px; top: 0; bottom: 0; width: 1px; background: #555; }
.item .ex { color: #bdbdbd; margin-right: 6px; }
.item .ic { margin-right: 5px; }
.item .actico { margin: 0 4px 0 -2px; }
.w-cam { width: 61px; }
.w-cube { width: 51px; }
.w-obj { width: 52px; }
.orange { color: #e8761f; }
.camdata { width: 10px; height: 18px; background: #4a4a4a; border-radius: 4px 0 0 4px; display: flex; align-items: center; }
.ol-scroll { height: 3px; margin: 0 8px 3px; background: #3c3c3c; border-radius: 2px; flex: none; }

.properties { flex: 1; min-height: 0; background: #2b2b2b; border-radius: 6px 0 0 6px; display: flex; flex-direction: column; overflow: hidden; }
.pr-head { height: 25px; background: #303030; display: flex; align-items: center; padding-left: 7px; flex: none; }
.pr-head .w31 { justify-content: center; gap: 1px; }
.s-pr { width: 118px; margin-left: 25px; }
.pr-head .w18 { margin-left: 17px; }
.pr-body { flex: 1; min-height: 0; display: flex; position: relative; overflow: hidden; }
.pr-tabs { width: 27px; background: #1d1d1d; flex: none; }
.tabgroup { padding: 0 0 3px; border-bottom: 1px solid #282828; margin-bottom: 3px; display: flex; flex-direction: column; }
.tabgroup.first { padding-top: 7px; }
.tabgroup.last { border: 0; margin: 5px 0 0; }
.ptab { height: 28px; width: 27px; display: flex; align-items: center; justify-content: center; border-radius: 4px 0 0 4px; color: #c9c9c9; padding-left: 1px; }
.tabgroup:nth-child(1) .ptab { height: 30px; }
.ptab.current { background: #2f2f2f; }
.pr-main { flex: 1; padding: 7px 6px 0 8px; min-width: 0; }
.ctx { height: 24px; display: flex; align-items: center; padding: 0 2px; color: #d8d8d8; }
.ctx-t { margin-left: 9px; flex: 1; }
.c-ic { color: #e2e2e2; }
.c-pin { color: #9a9a9a; }
.namefield { height: 19px; margin-top: 15px; background: #1d1d1d; border-radius: 4px; display: flex; align-items: center; color: #d8d8d8; }
.nf-ic { width: 31px; height: 19px; background: #282828; display: flex; align-items: center; justify-content: center; border-radius: 4px 0 0 4px; }
.nf-t { padding-left: 7px; }
.panel { background: #383838; border-radius: 5px; }
.transform { margin-top: 10px; height: 281px; padding: 3px 0 0; }
.p-title { height: 20px; display: flex; align-items: center; padding: 0 8px; gap: 2px; color: #d4d4d4; }
.p-title .ch { color: #bbb; }
.grip { margin-left: auto; }
.pgroup { display: flex; flex-direction: column; gap: 1px; margin-top: 6px; }
.p-title + .pgroup { margin-top: 10px; }
.prow { height: 19px; display: flex; align-items: center; }
.pl { width: 60px; text-align: right; color: #d0d0d0; white-space: nowrap; }
.num { width: 60px; height: 19px; margin-left: 11px; background: #545454; color: #e0e0e0; text-align: center; line-height: 19px; }
.num.top { border-radius: 3px 3px 0 0; }
.num.bot { border-radius: 0 0 3px 3px; }
.lk { color: #b8b8b8; margin-left: 4px; }
.lk.blank { width: 15px; display: block; }
.dot { width: 4px; height: 4px; border-radius: 50%; background: #e0e0e0; margin-left: 10px; }
.modesel { width: 60px; height: 19px; margin-left: 11px; background: #1f1f1f; border-radius: 4px; display: flex; align-items: center; justify-content: space-between; padding: 0 2px 0 7px; color: #e0e0e0; }
.subp { display: flex; align-items: center; gap: 7px; margin: 12px 0 0 24px; color: #c8c8c8; height: 20px; }
.subp svg { color: #bbb; }
.closed { height: 25px; margin-top: 2px; display: flex; align-items: center; padding: 0 8px 0 9px; gap: 6px; color: #d4d4d4; }
.closed svg:first-child { color: #bbb; }
.stub { height: 8px; }
.pr-scroll { position: absolute; right: 1px; top: 8px; height: 90px; width: 3px; background: #3c3c3c; border-radius: 2px; }

/* timeline */
.timeline { height: 48px; flex: none; border-radius: 6px; overflow: hidden; background: #1d1d1d; }
.tl-head { height: 25px; background: #303030; display: flex; align-items: center; padding: 0 9px; }
.pk { margin-left: 6px; }
.pb { width: 71px; justify-content: flex-start; padding-left: 7px; gap: 5px; border-right: 1px solid #3a3a3a; }
.ky { width: 62px; justify-content: flex-start; padding-left: 7px; gap: 5px; }
.tlm { margin-left: 10px; }
.tl-mid { display: flex; gap: 8px; margin-left: 179px; }
.transport { display: flex; height: 18px; border-radius: 4px; overflow: hidden; gap: 1px; background: #383838; }
.tp { width: 19px; background: #545454; display: flex; align-items: center; justify-content: center; }
.tl-right { display: flex; gap: 6px; margin-left: 184px; }
.cur { width: 74px; height: 18px; background: #545454; border-radius: 4px; text-align: center; line-height: 18px; color: #e0e0e0; }
.range { display: flex; height: 18px; border-radius: 4px; overflow: hidden; background: #383838; gap: 1px; }
.stop { width: 18px; background: #303030; display: flex; align-items: center; justify-content: center; }
.rf { background: #545454; display: flex; justify-content: space-between; line-height: 18px; color: #dcdcdc; }
.st { width: 89px; padding: 0 14px 0 15px; }
.en { width: 85px; padding: 0 14px; }
.ruler { height: 23px; background: #1d1d1d; display: flex; }
.tick { width: 79.7px; flex: none; text-align: center; line-height: 22px; color: #a8a8a8; }
.cur-tick { margin-left: -6px; width: 81.2px; padding-right: 1.5px; }
.cur-tick b { display: inline-block; width: 24px; height: 17px; margin-top: 3px; background: #4772b3; border-radius: 4px; color: #fff; font-weight: 400; line-height: 16px; vertical-align: top; }

/* status bar */
.status { flex: 1; min-height: 0; background: #181818; display: flex; align-items: center; padding-top: 3px; color: #9c9c9c; font-size: 11px; }
.st-i { display: flex; align-items: center; gap: 3px; margin-left: 11px; }
.st-i.first { margin-left: 9px; }
.st-r { display: flex; align-items: center; margin-left: auto; margin-right: 7px; gap: 8px; color: #8a8a8a; }
.st-sep { width: 1px; height: 12px; background: #666; margin-right: -4px; }
```
